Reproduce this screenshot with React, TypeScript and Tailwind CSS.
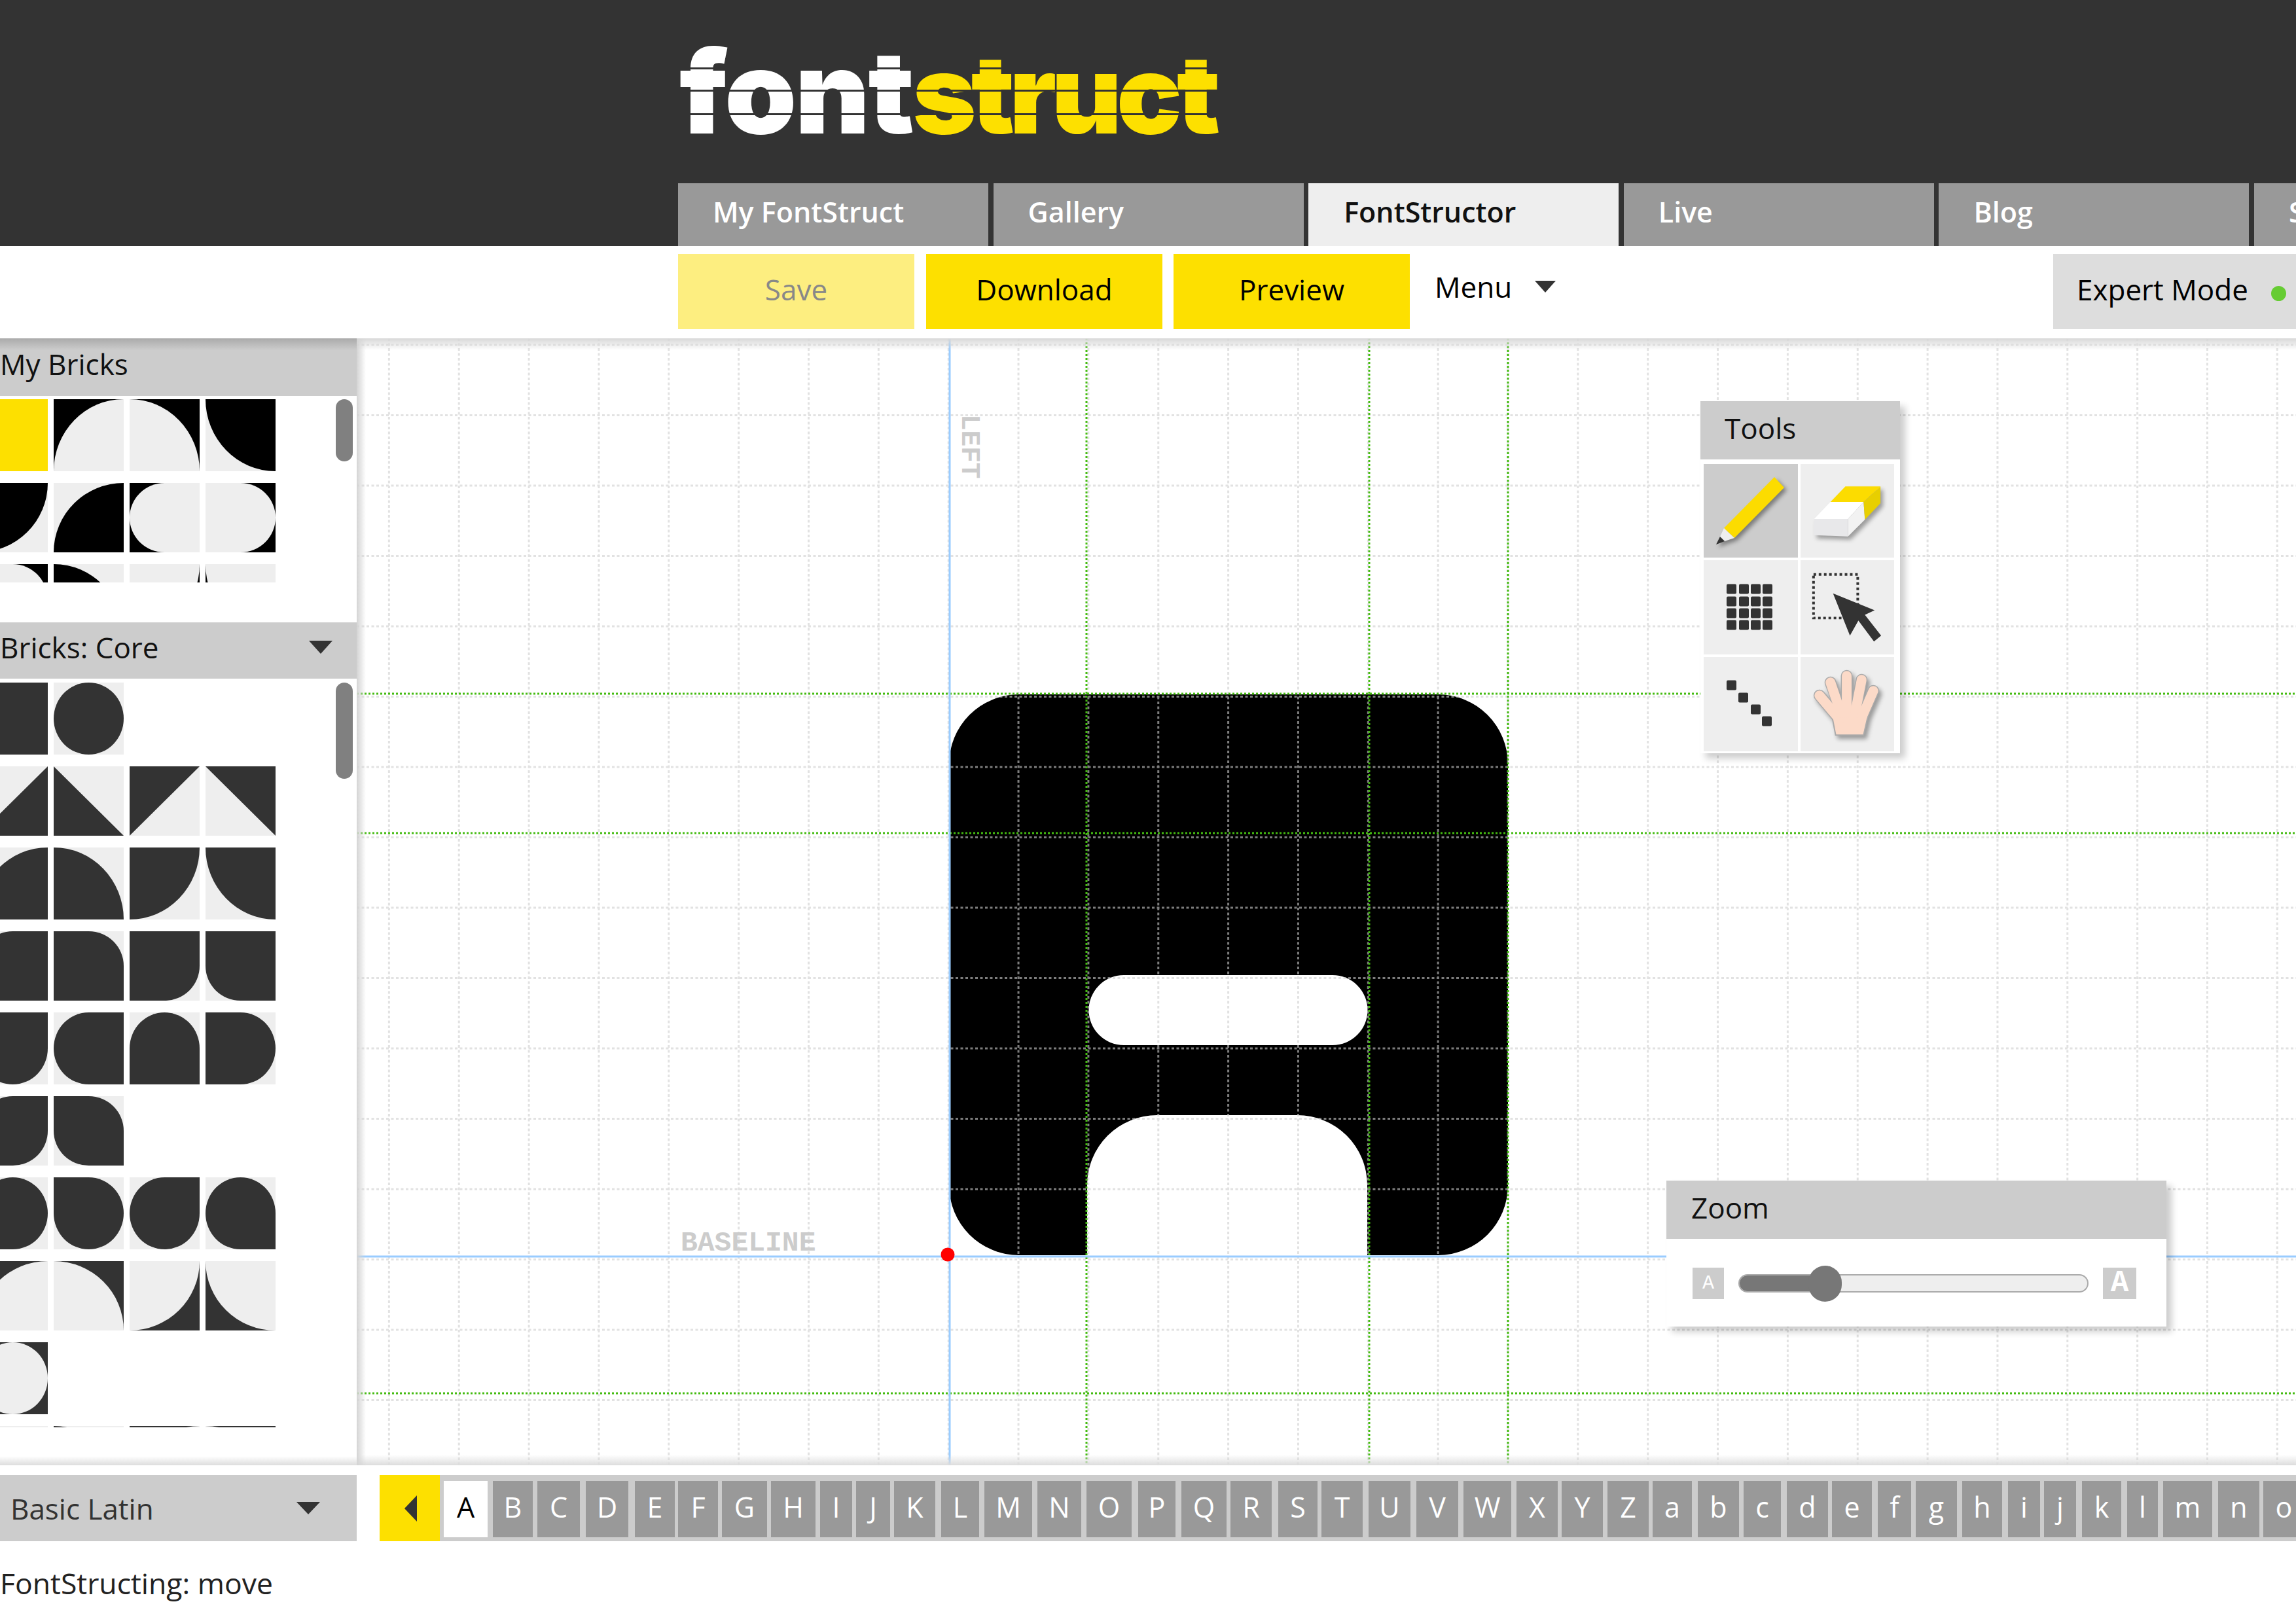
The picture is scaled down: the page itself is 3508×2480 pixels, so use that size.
const tabs = ["My FontStruct", "Gallery", "FontStructor", "Live", "Blog", "Support"];

// [tl, tr, br, bl] corner radii of the dark shape, in a 100x100 tile
type Brick = { r?: number[]; tri?: string; inv?: boolean } | null;

const myBricks: Brick[][] = [
  [{ r: [0, 0, 0, 0] }, { r: [100, 0, 0, 0], inv: true }, { r: [0, 100, 0, 0], inv: true }, { r: [0, 0, 0, 100] }],
  [{ r: [0, 0, 100, 0] }, { r: [100, 0, 0, 0] }, { r: [50, 0, 0, 50], inv: true }, { r: [0, 50, 50, 0], inv: true }],
  [{ r: [0, 50, 0, 0], inv: true }, { r: [0, 100, 0, 0] }, { r: [0, 0, 100, 0], inv: true }, { r: [0, 0, 0, 100], inv: true }],
];

const coreBricks: Brick[][] = [
  [{ r: [0, 0, 0, 0] }, { r: [50, 50, 50, 50] }, null, null],
  [{ tri: "100,0 100,100 0,100" }, { tri: "0,0 100,100 0,100" }, { tri: "0,0 100,0 0,100" }, { tri: "0,0 100,0 100,100" }],
  [{ r: [100, 0, 0, 0] }, { r: [0, 100, 0, 0] }, { r: [0, 0, 100, 0] }, { r: [0, 0, 0, 100] }],
  [{ r: [50, 0, 0, 0] }, { r: [0, 50, 0, 0] }, { r: [0, 0, 50, 0] }, { r: [0, 0, 0, 50] }],
  [{ r: [0, 0, 50, 50] }, { r: [50, 0, 0, 50] }, { r: [50, 50, 0, 0] }, { r: [0, 50, 50, 0] }],
  [{ r: [50, 0, 50, 0] }, { r: [0, 50, 0, 50] }, null, null],
  [{ r: [50, 50, 50, 0] }, { r: [0, 50, 50, 50] }, { r: [50, 0, 50, 50] }, { r: [50, 50, 0, 50] }],
  [{ r: [100, 0, 0, 0], inv: true }, { r: [0, 100, 0, 0], inv: true }, { r: [0, 0, 100, 0], inv: true }, { r: [0, 0, 0, 100], inv: true }],
  [{ r: [50, 50, 50, 50], inv: true }, null, null, null],
  [{ r: [0, 100, 0, 0] }, { r: [0, 100, 0, 0] }, { r: [100, 0, 0, 0], inv: true }, { r: [0, 100, 0, 0], inv: true }],
];

// letter tiles: character, width, gap after it
const letters: [string, number, number][] = [
  ["A", 67, 8], ["B", 61, 7], ["C", 65, 9], ["D", 65, 10], ["E", 61, 5], ["F", 61, 6], ["G", 69, 6], ["H", 68, 7],
  ["I", 49, 6], ["J", 52, 6], ["K", 63, 9], ["L", 58, 8], ["M", 73, 8], ["N", 67, 8], ["O", 69, 10], ["P", 57, 9],
  ["Q", 69, 6], ["R", 63, 10], ["S", 60, 6], ["T", 63, 9], ["U", 64, 9], ["V", 64, 8], ["W", 73, 8], ["X", 63, 6],
  ["Y", 63, 7], ["Z", 63, 6], ["a", 60, 9], ["b", 63, 7], ["c", 57, 9], ["d", 63, 6], ["e", 61, 9], ["f", 51, 7],
  ["g", 63, 8], ["h", 61, 9], ["i", 49, 6], ["j", 49, 9], ["k", 60, 9], ["l", 47, 8], ["m", 75, 9], ["n", 63, 6], ["o", 63, 0],
];

function corners([tl, tr, br, bl]: number[]) {
  return `M${tl} 0L${100 - tr} 0A${tr} ${tr} 0 0 1 100 ${tr}L100 ${100 - br}A${br} ${br} 0 0 1 ${100 - br} 100L${bl} 100A${bl} ${bl} 0 0 1 0 ${100 - bl}L0 ${tl}A${tl} ${tl} 0 0 1 ${tl} 0Z`;
}

function Tile({ brick, color, tall }: { brick: Brick; color: string; tall: boolean }) {
  const h = tall ? "h-[110px]" : "h-[106px]";
  if (!brick) return <div className={h} />;
  return (
    <svg className={`${h} w-[107px] block`} viewBox="0 0 100 100" preserveAspectRatio="none">
      <rect width="100" height="100" fill={brick.inv ? color : "#eeeeee"} />
      {brick.tri ? (
        <polygon points={brick.tri} fill={color} />
      ) : (
        <path d={corners(brick.r!)} fill={brick.inv ? "#eeeeee" : color} />
      )}
    </svg>
  );
}

function BrickList({ rows, color, first }: { rows: Brick[][]; color: string; first?: string }) {
  return (
    <div className="flex flex-col gap-[18px] ml-[-34px]">
      {rows.map((row, i) => (
        <div key={i} className="flex gap-[9px]">
          {row.map((b, j) => (
            <div key={j} className="w-[107px]">
              <Tile brick={b} color={first && i === 0 && j === 0 ? first : color} tall={i % 2 === 0} />
            </div>
          ))}
        </div>
      ))}
    </div>
  );
}

function Triangle({ className, points, w, h }: { className: string; points: string; w: number; h: number }) {
  return (
    <svg className={className} viewBox={`0 0 ${w} ${h}`}>
      <polygon points={points} fill="#333333" />
    </svg>
  );
}

function PanelHead({ children, className }: { children: React.ReactNode; className: string }) {
  return <div className={`bg-[#cccccc] text-[44px] leading-none text-[#111] flex items-center ${className}`}>{children}</div>;
}

function ToolTile({ children, active }: { children: React.ReactNode; active?: boolean }) {
  return (
    <div className={`h-full ${active ? "bg-[#cccccc]" : "bg-[#eeeeee]"}`}>
      <svg className="w-full h-full block" viewBox="0 0 144 143">
        {children}
      </svg>
    </div>
  );
}

function Squares({ cells }: { cells: number[][] }) {
  return (
    <>
      {cells.map(([x, y]) => (
        <rect key={`${x}-${y}`} x={x} y={y} width="15" height="15" rx="2" fill="#333333" />
      ))}
    </>
  );
}

function Canvas() {
  const xs = Array.from({ length: 30 }, (_, i) => 2304 + (i - 16) * 106.85 - 545);
  const ys = Array.from({ length: 18 }, (_, i) => 527 + i * 107.5 - 517);
  return (
    <div className="flex-1 relative overflow-hidden bg-white">
      <svg className="absolute inset-0 w-full h-full" viewBox="0 0 2963 1722">
        <path
          fillRule="evenodd"
          fill="#000000"
          d="M1012 544H1652A107 107 0 0 1 1759 651V1294A107 107 0 0 1 1652 1401H1544V1294A107 107 0 0 0 1437 1187H1223A107 107 0 0 0 1116 1294V1401H1012A107 107 0 0 1 905 1294V651A107 107 0 0 1 1012 544ZM1172 973A53.5 53.5 0 0 0 1172 1080H1491A53.5 53.5 0 0 0 1491 973Z"
        />
        <g stroke="#d0d0d0" strokeWidth="3" strokeDasharray="4 3.5" opacity="0.6">
          {xs.map((x) => (
            <line key={x} x1={x} x2={x} y1="0" y2="1722" />
          ))}
          {ys.map((y) => (
            <line key={y} x1="0" x2="2963" y1={y} y2={y} />
          ))}
        </g>
        <g stroke="#44bb11" strokeWidth="3" strokeDasharray="3 3">
          <line x1="1115" x2="1115" y1="0" y2="1722" />
          <line x1="1547" x2="1547" y1="0" y2="1722" />
          <line x1="1759" x2="1759" y1="0" y2="1722" />
          <line x1="0" x2="2963" y1="543" y2="543" />
          <line x1="0" x2="2963" y1="756" y2="756" />
          <line x1="0" x2="2963" y1="1612" y2="1612" />
        </g>
        <g stroke="#99ccff" strokeWidth="3">
          <line x1="906" x2="906" y1="0" y2="1722" />
          <line x1="0" x2="2963" y1="1403" y2="1403" />
        </g>
        <circle cx="903" cy="1400" r="10.5" fill="#ff0000" />
      </svg>

      <div className="absolute top-0 inset-x-0 h-[18px] bg-linear-to-b from-[#d8d8d8] to-transparent" />
      <div className="absolute bottom-0 inset-x-0 h-[16px] bg-linear-to-t from-[#dddddd] to-transparent" />
      <div className="absolute left-0 inset-y-0 w-[14px] bg-linear-to-r from-[#d4d4d4] to-transparent" />

      <span className="absolute left-[495px] top-[1361px] font-['Liberation_Mono',monospace] font-bold text-[43px] leading-none text-[#cccccc]">
        BASELINE
      </span>
      <span className="absolute left-[915px] top-[116px] font-['Liberation_Mono',monospace] font-bold text-[41px] leading-none text-[#cccccc] [writing-mode:vertical-rl]">
        LEFT
      </span>

      {/* Tools window */}
      <div className="absolute left-[2053px] top-[96px] w-[305px] h-[538px] bg-white shadow-[8px_8px_10px_rgba(0,0,0,0.2)] flex flex-col">
        <PanelHead className="h-[89px] pl-[37px] pb-[8px] shrink-0">Tools</PanelHead>
        <div className="grid grid-cols-[144px_143px] grid-rows-[143px_144px_144px] gap-[4px] pl-[5px] pt-[7px]">
          <ToolTile active>
            <g className="drop-shadow-[4px_4px_3px_rgba(0,0,0,0.4)]">
              <polygon points="108,20 123,36 47,113 31,98" fill="#fcdc00" />
              <polygon points="31,98 47,113 32,118 25,111" fill="#eeeeee" />
              <polygon points="25,111 32,118 19,123" fill="#333333" />
            </g>
          </ToolTile>
          <ToolTile>
            <g className="drop-shadow-[4px_5px_3px_rgba(0,0,0,0.35)]">
              <polygon points="69,34 123,34 97,58 46,58" fill="#fcdc00" />
              <polygon points="46,58 97,58 73,84 21,84" fill="#ffffff" />
              <polygon points="21,84 73,84 73,111 21,109" fill="#e8e8ea" />
              <polygon points="97,58 99,85 73,111 73,84" fill="#f2f2f2" />
              <polygon points="123,34 123,60 99,85 97,58" fill="#e8cf00" />
            </g>
          </ToolTile>
          <ToolTile>
            <Squares
              cells={[35, 54, 72, 90].flatMap((x) => [36, 55, 73, 91].map((y) => [x, y]))}
            />
          </ToolTile>
          <ToolTile>
            <rect x="20" y="21" width="68" height="67" fill="none" stroke="#333333" strokeWidth="4" strokeDasharray="4 4" />
            <polygon points="50,50 114,76 99,83 124,115 113,124 89,92 76,115" fill="#333333" />
          </ToolTile>
          <ToolTile>
            <Squares cells={[[35, 35], [53, 54], [72, 72], [89, 90]]} />
          </ToolTile>
          <ToolTile>
            <g className="drop-shadow-[4px_5px_3px_rgba(0,0,0,0.35)]" strokeLinecap="round">
              <g stroke="#aaaaaa" strokeWidth="18">
                <line x1="29" y1="58" x2="60" y2="95" />
                <line x1="46" y1="38" x2="62" y2="80" />
                <line x1="71" y1="28" x2="71" y2="80" />
                <line x1="94" y1="34" x2="84" y2="80" />
                <line x1="112" y1="51" x2="95" y2="90" />
              </g>
              <polygon points="48,88 54,119 97,119 106,80 58,70" fill="#fcdac8" stroke="#aaaaaa" strokeWidth="2" />
              <g stroke="#fcdac8" strokeWidth="15">
                <line x1="29" y1="58" x2="60" y2="95" />
                <line x1="46" y1="38" x2="62" y2="85" />
                <line x1="71" y1="28" x2="71" y2="85" />
                <line x1="94" y1="34" x2="84" y2="85" />
                <line x1="112" y1="51" x2="95" y2="90" />
              </g>
            </g>
          </ToolTile>
        </div>
      </div>

      {/* Zoom window */}
      <div className="absolute left-[2001px] top-[1287px] w-[764px] h-[223px] bg-white shadow-[8px_8px_10px_rgba(0,0,0,0.2)] flex flex-col">
        <PanelHead className="h-[89px] pl-[38px] pb-[8px]">Zoom</PanelHead>
        <div className="flex items-center pl-[40px] pt-[44px]">
          <div className="w-[48px] h-[48px] bg-[#cccccc] flex items-center justify-center font-['Liberation_Mono',monospace] text-[30px] text-white">
            A
          </div>
          <div className="relative w-[535px] h-[28px] ml-[22px] rounded-full bg-[#eeeeee] border-2 border-[#aaaaaa]">
            <div className="w-[130px] h-full rounded-l-full bg-[#777777]" />
            <div className="absolute left-[105px] top-[-15px] w-[51px] h-[55px] rounded-full bg-[#777777]" />
          </div>
          <div className="w-[51px] h-[48px] ml-[22px] bg-[#cccccc] flex items-center justify-center font-['Liberation_Mono',monospace] font-bold text-[46px] text-white">
            A
          </div>
        </div>
      </div>
    </div>
  );
}

export default function App() {
  return (
    <div className="w-[3508px] h-[2480px] overflow-hidden bg-white flex flex-col font-['Open_Sans',sans-serif] text-[43px] text-black">
      <header className="h-[376px] shrink-0 bg-[#333333] pl-[1036px] flex flex-col justify-between">
        <div className="relative w-[830px] h-[135px] mt-[72px] ml-[2px] font-['Inter',sans-serif] font-black text-[176px] leading-[135px] whitespace-nowrap">
          <span className="text-white tracking-[-2.5px]">font</span>
          <span className="text-[#fde000] text-[166px] tracking-[-8px]">struct</span>
          <div className="absolute inset-x-0 top-[31px] h-[3px] bg-[#333333]" />
          <div className="absolute inset-x-0 top-[65px] h-[3px] bg-[#333333]" />
          <div className="absolute inset-x-0 top-[101px] h-[3px] bg-[#333333]" />
        </div>
        <nav className="flex gap-[7.6px] h-[96px]">
          {tabs.map((t) => (
            <div
              key={t}
              className={`w-[474px] shrink-0 pl-[53px] pb-[8px] flex items-center font-semibold text-[43px] ${
                t === "FontStructor" ? "bg-[#eeeeee] text-[#111] pl-[54px]" : "bg-[#999999] text-white"
              }`}
            >
              {t}
            </div>
          ))}
        </nav>
      </header>

      <div className="h-[141px] shrink-0 pl-[1036px] pt-[12px] flex items-start text-[44px]">
        <button className="w-[361px] h-[115px] pb-[8px] bg-[#fdee80] text-[#888888]">Save</button>
        <button className="w-[361px] h-[115px] pb-[8px] ml-[18px] bg-[#fde000]">Download</button>
        <button className="w-[361px] h-[115px] pb-[8px] ml-[17px] bg-[#fde000]">Preview</button>
        <div className="flex items-center h-[100px] ml-[38px] gap-[35px]">
          <span>Menu</span>
          <Triangle className="w-[32px] h-[18px]" w={32} h={18} points="0,0 32,0 16,18" />
        </div>
        <div className="ml-auto w-[400px] h-[115px] mr-[-29px] bg-[#dddddd] pl-[36px] pb-[8px] flex items-center gap-[35px]">
          <span>Expert Mode</span>
          <span className="w-[23px] h-[23px] mt-[14px] rounded-full bg-[#66cc33]" />
        </div>
      </div>

      <main className="flex-1 flex min-h-0">
        <aside className="w-[545px] shrink-0 flex flex-col">
          <div className="relative">
            <PanelHead className="h-[88px] pb-[10px] text-[43px]">My Bricks</PanelHead>
            <div className="absolute inset-x-0 top-0 h-[18px] bg-linear-to-b from-[#aaaaaa] to-transparent" />
          </div>
          <div className="h-[346px] pt-[5px] pr-[6px] flex justify-between">
            <div className="h-[280px] overflow-hidden">
              <BrickList rows={myBricks} color="#000000" first="#fde000" />
            </div>
            <div className="w-[26px] h-[95px] rounded-full bg-[#808080]" />
          </div>
          <PanelHead className="h-[86px] pb-[10px] justify-between pr-[37px]">
            Bricks: Core
            <Triangle className="w-[36px] h-[20px]" w={36} h={20} points="0,0 36,0 18,20" />
          </PanelHead>
          <div className="relative flex-1 pt-[6px] pr-[6px] flex justify-between">
            <div className="h-[1138px] overflow-hidden">
              <BrickList rows={coreBricks} color="#333333" />
            </div>
            <div className="w-[26px] h-[147px] rounded-full bg-[#808080]" />
            <div className="absolute inset-x-0 bottom-0 h-[14px] bg-linear-to-t from-[#dddddd] to-transparent" />
          </div>
        </aside>
        <Canvas />
      </main>

      <div className="h-[241px] shrink-0 pt-[15px] flex flex-col">
        <div className="flex h-[101px] shrink-0">
          <div className="w-[545px] shrink-0 bg-[#cccccc] pl-[16px] pr-[56px] flex items-center justify-between text-[44px] text-[#333333]">
            Basic Latin
            <Triangle className="w-[36px] h-[19px]" w={36} h={19} points="0,0 36,0 18,19" />
          </div>
          <div className="ml-[35px] flex-1 bg-[#cccccc] flex">
            <div className="w-[92px] shrink-0 bg-[#fde000] flex items-center pl-[38px]">
              <Triangle className="w-[19px] h-[40px]" w={19} h={40} points="19,0 19,40 0,20" />
            </div>
            <div className="flex pl-[6px] pt-[9px] h-[95px]">
              {letters.map(([c, w, g], i) => (
                <div
                  key={c}
                  className={`shrink-0 flex items-center justify-center pb-[6px] ${i === 0 ? "bg-white text-black" : "bg-[#999999] text-white"}`}
                  style={{ width: w, marginRight: g }}
                >
                  {c}
                </div>
              ))}
            </div>
          </div>
        </div>
        <div className="mt-[34px] text-[44.5px] text-[#222222] leading-[60px]">FontStructing: move</div>
      </div>
    </div>
  );
}
